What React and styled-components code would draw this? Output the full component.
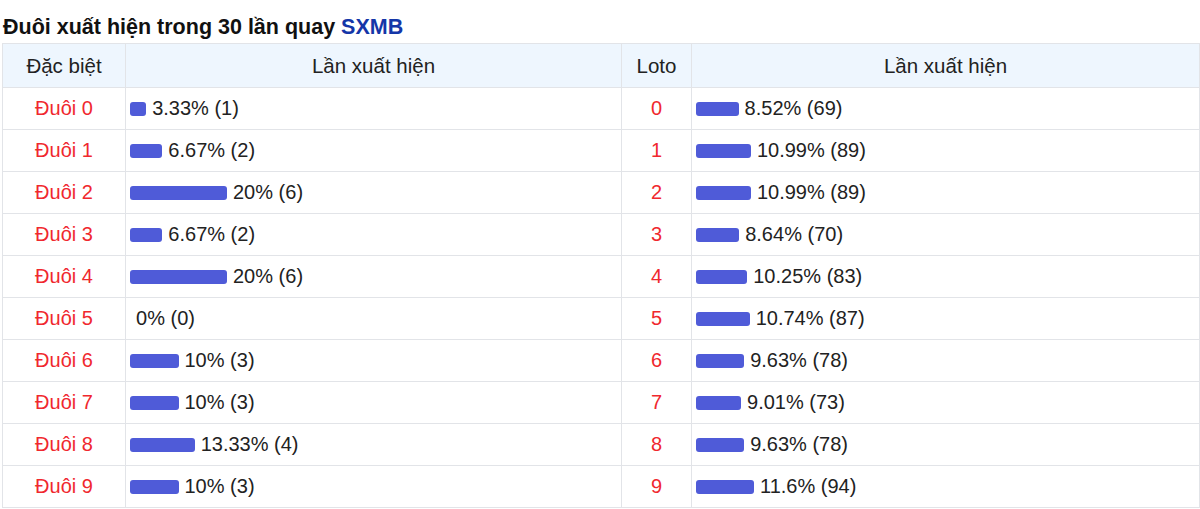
import styled, { createGlobalStyle } from "styled-components";

const GlobalStyle = createGlobalStyle`
  body {
    margin: 0;
    background: #fff;
    font-family: "Liberation Sans", Arial, sans-serif;
    color: #222;
  }
`;

const special = [
  { label: "Đuôi 0", pct: 3.33, count: 1 },
  { label: "Đuôi 1", pct: 6.67, count: 2 },
  { label: "Đuôi 2", pct: 20, count: 6 },
  { label: "Đuôi 3", pct: 6.67, count: 2 },
  { label: "Đuôi 4", pct: 20, count: 6 },
  { label: "Đuôi 5", pct: 0, count: 0 },
  { label: "Đuôi 6", pct: 10, count: 3 },
  { label: "Đuôi 7", pct: 10, count: 3 },
  { label: "Đuôi 8", pct: 13.33, count: 4 },
  { label: "Đuôi 9", pct: 10, count: 3 },
];

const loto = [
  { label: "0", pct: 8.52, count: 69 },
  { label: "1", pct: 10.99, count: 89 },
  { label: "2", pct: 10.99, count: 89 },
  { label: "3", pct: 8.64, count: 70 },
  { label: "4", pct: 10.25, count: 83 },
  { label: "5", pct: 10.74, count: 87 },
  { label: "6", pct: 9.63, count: 78 },
  { label: "7", pct: 9.01, count: 73 },
  { label: "8", pct: 9.63, count: 78 },
  { label: "9", pct: 11.6, count: 94 },
];

const Wrapper = styled.div`
  padding: 14px 1px 0 2px;
`;

const Title = styled.h2`
  margin: 0 0 3px 1px;
  font-size: 21.5px;
  line-height: 26px;
  font-weight: bold;
  color: #111;
`;

const Brand = styled.span`
  color: #1436a8;
`;

const Table = styled.table`
  width: 1197px;
  border-collapse: collapse;
  table-layout: fixed;
  font-size: 20px;
`;

const HeadCell = styled.th`
  height: 43px;
  padding: 0;
  background: #eef6fe;
  border: 1px solid #e2e4e8;
  font-weight: normal;
  font-size: 20.5px;
  text-align: center;
  color: #222;
`;

const Row = styled.tr`
  height: 42px;
`;

const LabelCell = styled.td`
  padding: 0;
  border: 1px solid #e2e4e8;
  text-align: center;
  color: #f0282e;
`;

const BarCell = styled.td`
  padding: 0 0 0 4px;
  border: 1px solid #e2e4e8;
  white-space: nowrap;
`;

const Bar = styled.span`
  display: inline-block;
  height: 14px;
  margin-right: 6px;
  border-radius: 3px;
  background: #4f5bd8;
  vertical-align: -1px;
`;

const App = () => {
  return (
    <Wrapper>
      <GlobalStyle />
      <Title>
        Đuôi xuất hiện trong 30 lần quay <Brand>SXMB</Brand>
      </Title>
      <Table>
        <colgroup>
          <col style={{ width: 123 }} />
          <col style={{ width: 496 }} />
          <col style={{ width: 70 }} />
          <col style={{ width: 508 }} />
        </colgroup>
        <thead>
          <tr>
            <HeadCell>Đặc biệt</HeadCell>
            <HeadCell>Lần xuất hiện</HeadCell>
            <HeadCell>Loto</HeadCell>
            <HeadCell>Lần xuất hiện</HeadCell>
          </tr>
        </thead>
        <tbody>
          {special.map((s, i) => {
            const l = loto[i];
            return (
              <Row key={s.label}>
                <LabelCell>{s.label}</LabelCell>
                <BarCell>
                  <Bar style={{ width: s.pct * 4.85 }} />
                  {s.pct}% ({s.count})
                </BarCell>
                <LabelCell>{l.label}</LabelCell>
                <BarCell>
                  <Bar style={{ width: l.pct * 5 }} />
                  {l.pct}% ({l.count})
                </BarCell>
              </Row>
            );
          })}
        </tbody>
      </Table>
    </Wrapper>
  );
};

export default App;
